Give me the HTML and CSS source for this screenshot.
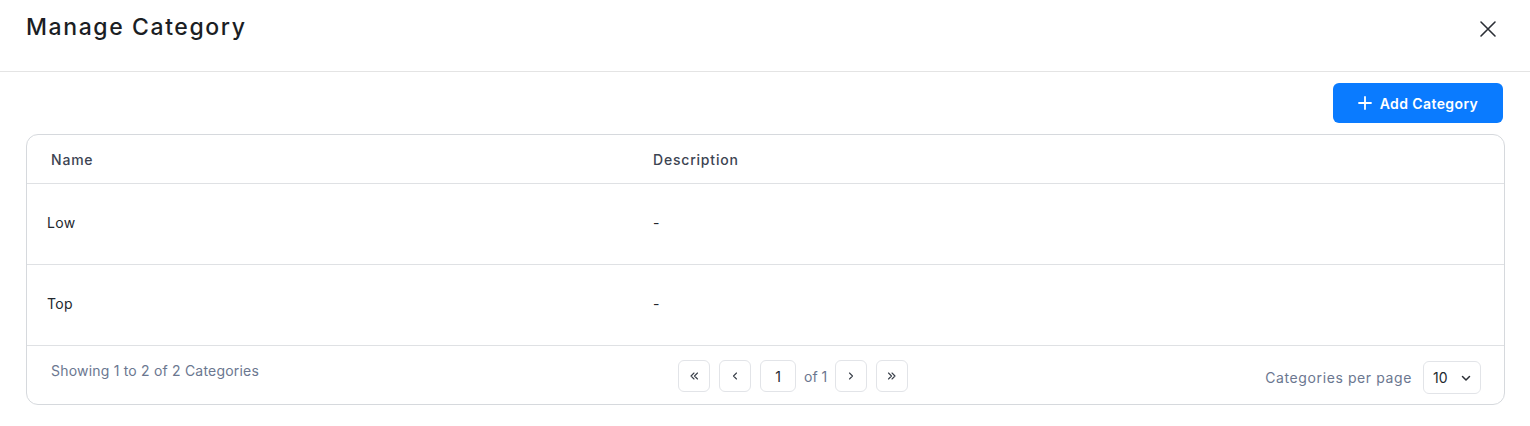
FILE: index.html
```html
<!DOCTYPE html>
<html>
<head>
<meta charset="utf-8">
<link rel="stylesheet" href="styles.css">
</head>
<body>
<div class="modal">
  <div class="modal-header">
    <h1 class="title">Manage Category</h1>
    <button class="close" aria-label="Close">
      <svg width="18" height="18" viewBox="0 0 18 18"><path d="M2 2 L16 16 M16 2 L2 16" stroke="#2b2f36" stroke-width="1.6" stroke-linecap="round" fill="none"/></svg>
    </button>
  </div>
  <div class="modal-body">
    <div class="toolbar">
      <button class="btn-primary">
        <svg width="14" height="14" viewBox="0 0 14 14"><path d="M7 1 V13 M1 7 H13" stroke="#fff" stroke-width="1.8" stroke-linecap="round"/></svg>
        <span>Add Category</span>
      </button>
    </div>
    <div class="card">
      <div class="row head">
        <div class="cell c1">Name</div>
        <div class="cell c2">Description</div>
      </div>
      <div class="row body-row">
        <div class="cell c1">Low</div>
        <div class="cell c2">-</div>
      </div>
      <div class="row body-row">
        <div class="cell c1">Top</div>
        <div class="cell c2">-</div>
      </div>
      <div class="footer">
        <div class="showing">Showing 1 to 2 of 2 Categories</div>
        <div class="pager">
          <button class="pbtn"><svg width="12" height="12" viewBox="0 0 12 12"><path d="M6 3 L3 6 L6 9 M9.5 3 L6.5 6 L9.5 9" stroke="#3a404a" stroke-width="1.1" fill="none" stroke-linecap="round" stroke-linejoin="round"/></svg></button>
          <button class="pbtn"><svg width="12" height="12" viewBox="0 0 12 12"><path d="M7.5 3 L4.5 6 L7.5 9" stroke="#3a404a" stroke-width="1.1" fill="none" stroke-linecap="round" stroke-linejoin="round"/></svg></button>
          <div class="pinput">1</div>
          <span class="of">of 1</span>
          <button class="pbtn"><svg width="12" height="12" viewBox="0 0 12 12"><path d="M4.5 3 L7.5 6 L4.5 9" stroke="#3a404a" stroke-width="1.1" fill="none" stroke-linecap="round" stroke-linejoin="round"/></svg></button>
          <button class="pbtn"><svg width="12" height="12" viewBox="0 0 12 12"><path d="M2.5 3 L5.5 6 L2.5 9 M6 3 L9 6 L6 9" stroke="#3a404a" stroke-width="1.1" fill="none" stroke-linecap="round" stroke-linejoin="round"/></svg></button>
        </div>
        <div class="perpage">
          <span class="pp-label">Categories per page</span>
          <div class="select"><span>10</span><svg width="12" height="12" viewBox="0 0 12 12"><path d="M2.5 4.5 L6 8 L9.5 4.5" stroke="#2b2f36" stroke-width="1.5" fill="none" stroke-linecap="round" stroke-linejoin="round"/></svg></div>
        </div>
      </div>
    </div>
  </div>
</div>
</body>
</html>
```
FILE: styles.css
```css
* { box-sizing: border-box; }
html, body { margin: 0; padding: 0; background: #fff; }
body { font-family: "Inter", "Noto Sans", sans-serif; color: #23272e; }
button { font-family: inherit; }

.modal-header {
  height: 72px;
  border-bottom: 1px solid #e4e4e4;
  display: flex;
  justify-content: space-between;
  align-items: flex-start;
  padding: 13px 33px 0 26px;
}
.title {
  margin: 0;
  font-size: 23px;
  line-height: 28px;
  font-weight: 500;
  color: #1b1e24;
  letter-spacing: 1.6px;
}
.close {
  border: 0; background: none; padding: 0; margin-top: 7px;
  width: 18px; height: 18px; display: flex;
}

.modal-body { padding: 11px 25px 0 26px; }
.toolbar { display: flex; justify-content: flex-end; }
.btn-primary {
  height: 40px;
  width: 170px;
  margin-right: 2px;
  border: 0;
  border-radius: 6px;
  background: #0a7bff;
  color: #fff;
  font-size: 14px;
  font-weight: 600;
  letter-spacing: 0.4px;
  display: flex;
  align-items: center;
  justify-content: center;
  gap: 8px;
}

.card {
  margin-top: 11px;
  border: 1px solid #d6d9dd;
  border-radius: 12px;
  overflow: hidden;
}
.row {
  display: grid;
  grid-template-columns: 602px 1fr;
  border-bottom: 1px solid #dfe1e4;
}
.head { height: 49px; align-items: center; }
.head .cell { font-size: 14px; color: #3d4452; font-weight: 500; letter-spacing: 0.8px; }
.head .c1 { padding-left: 24px; }
.body-row { height: 81px; align-items: center; }
.body-row .cell { font-size: 14px; color: #23272e; letter-spacing: 0.3px; padding-bottom: 3px; }
.body-row .c1 { padding-left: 20px; }
.c2 { padding-left: 24px; }

.footer {
  height: 58px;
  display: grid;
  grid-template-columns: 627px auto 1fr;
  align-items: flex-start;
  padding: 14px 23px 0 24px;
}
.showing { font-size: 14px; line-height: 20px; color: #6b7790; margin-top: 1px; letter-spacing: 0.2px; }
.pager { display: flex; align-items: center; gap: 9px; }
.pbtn {
  width: 32px; height: 32px;
  border: 1px solid #e2e4e8;
  border-radius: 6px;
  background: #fff;
  display: flex; align-items: center; justify-content: center;
  padding: 0;
}
.pinput {
  width: 36px; height: 32px;
  border: 1px solid #e2e4e8;
  border-radius: 6px;
  display: flex; align-items: center; justify-content: center;
  font-size: 14px; color: #23272e;
}
.of { font-size: 14px; color: #6b7790; margin: 0 -1px 0 -1px; }
.perpage { display: flex; align-items: center; justify-content: flex-end; gap: 11px; margin-top: 1px; }
.pp-label { font-size: 14px; color: #6b7790; letter-spacing: 0.6px; }
.select {
  width: 58px; height: 33px;
  border: 1px solid #e2e4e8;
  border-radius: 6px;
  display: flex; align-items: center; justify-content: space-between;
  padding: 0 8px 0 9px;
  font-size: 14px; color: #23272e;
}
```
